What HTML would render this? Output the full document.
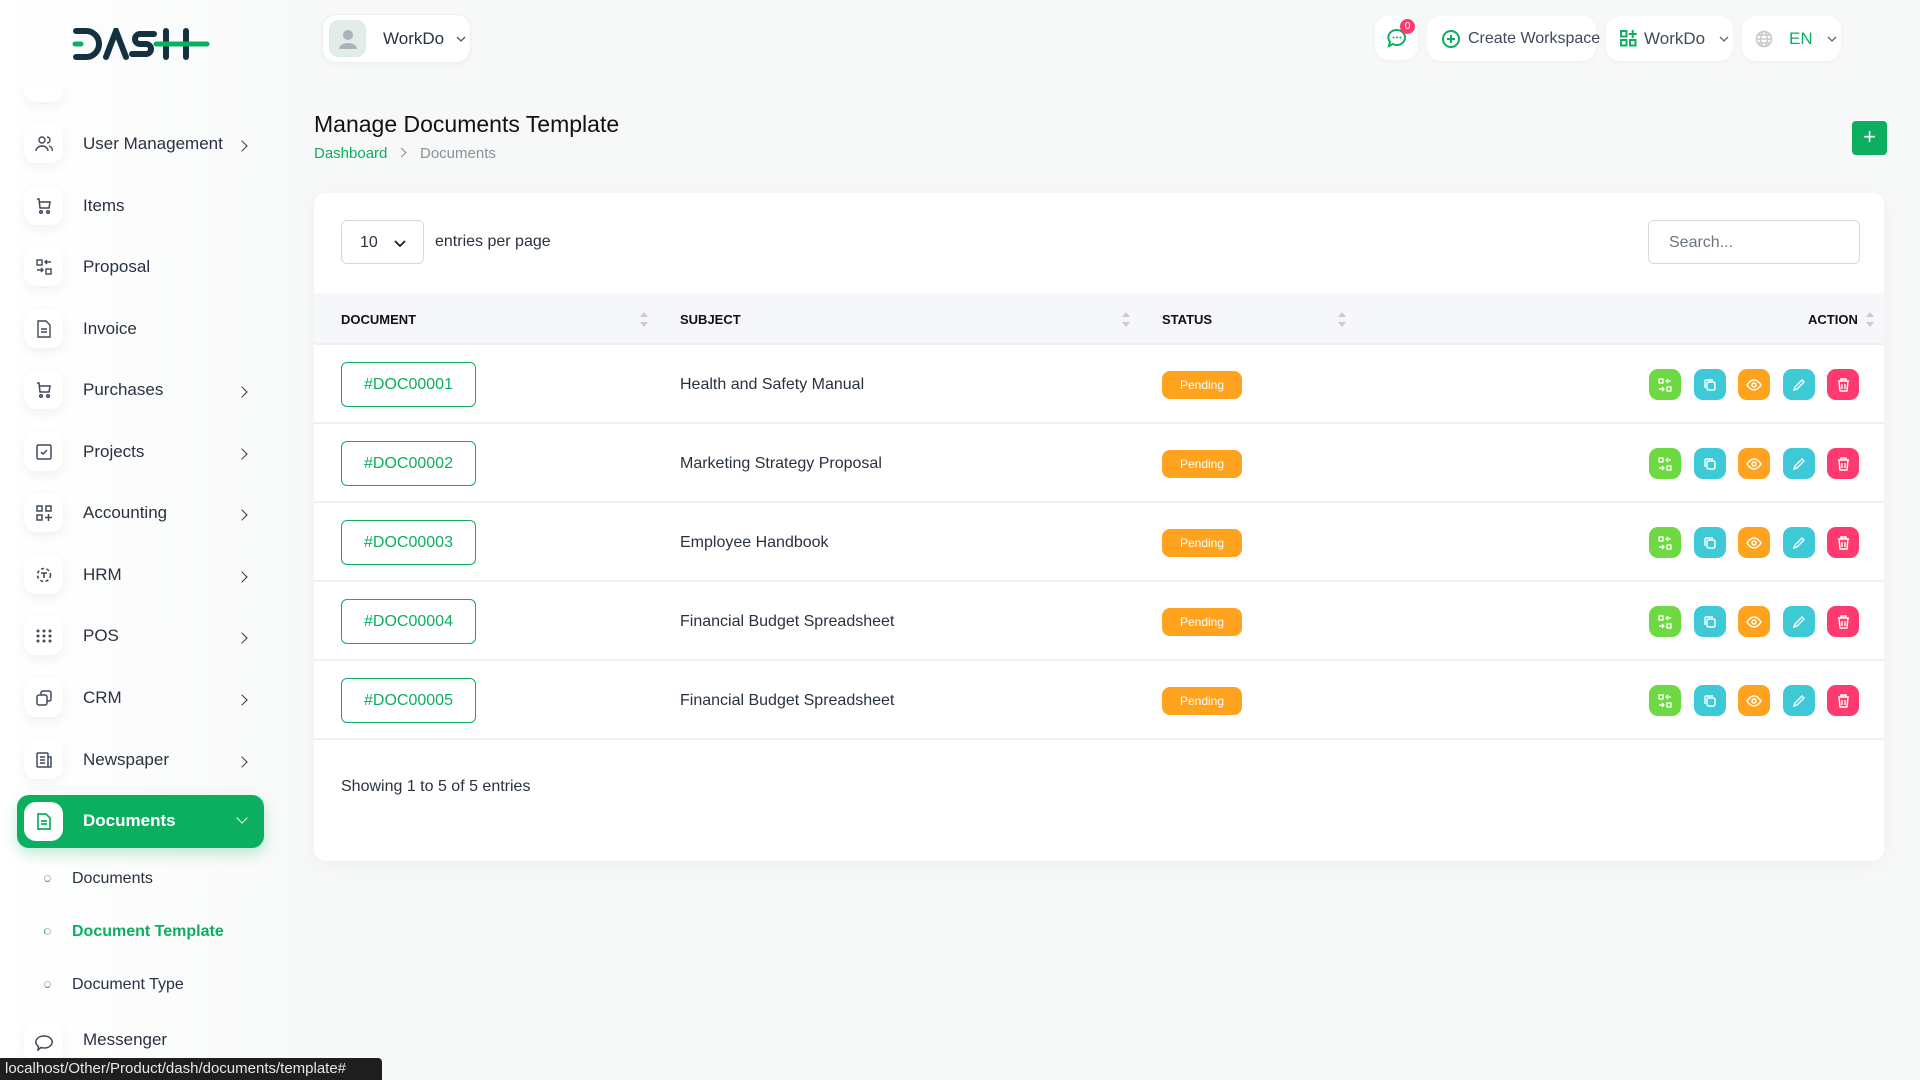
<!DOCTYPE html>
<html><head><meta charset="utf-8">
<style>
*{box-sizing:border-box;margin:0;padding:0}
body{width:1920px;height:1080px;overflow:hidden;background:#f7f8f8;font-family:"Liberation Sans",sans-serif;color:#293240;position:relative}
.abs{position:absolute;white-space:nowrap}
.side{position:absolute;left:0;top:0;width:290px;height:1080px;background:linear-gradient(90deg,#fff,#f8f9f9)}
.ib{position:absolute;left:24px;width:39px;height:39px;background:#fff;border-radius:12px;box-shadow:0 4px 12px rgba(0,0,0,.06);display:flex;align-items:center;justify-content:center}
.lbl{position:absolute;left:83px;font-size:17px;color:#293240;white-space:nowrap}
.chev{position:absolute;left:238px;width:8px;height:8px;border-right:1.6px solid #333;border-top:1.6px solid #333;transform:rotate(45deg)}
.pill{position:absolute;background:#fff;border-radius:14px;box-shadow:0 2px 6px rgba(0,0,0,.03);display:flex;align-items:center;white-space:nowrap}
.card{position:absolute;left:314px;top:193px;width:1570px;height:668px;background:#fff;border-radius:12px;box-shadow:0 4px 20px rgba(0,0,0,.04)}
.th{position:absolute;font-size:13px;font-weight:bold;color:#111;top:312px}
.sort{position:absolute;top:312px;width:8px;height:16px}
.sort:before{content:"";position:absolute;left:0;top:0;border:4px solid transparent;border-bottom:5px solid #ccc;border-top:0}
.sort:after{content:"";position:absolute;left:0;top:10px;border:4px solid transparent;border-top:5px solid #ccc;border-bottom:0}
.row{position:absolute;left:314px;width:1570px;height:79px;border-bottom:2px solid #eef0f2}
.doc{position:absolute;left:341px;width:135px;height:45px;border:1.5px solid #0caf60;border-radius:6px;color:#0caf60;font-size:16px;display:flex;align-items:center;justify-content:center}
.subj{position:absolute;left:680px;font-size:16px;color:#293240}
.badge{position:absolute;left:1162px;width:80px;height:28px;background:#ffa21d;border-radius:8px;color:#fff;font-size:12px;display:flex;align-items:center;justify-content:center}
.ab{position:absolute;width:32px;height:31px;border-radius:9px;display:flex;align-items:center;justify-content:center}
</style></head><body>
<div class="side"></div>
<svg class="abs" style="left:72px;top:28px" width="138" height="32" viewBox="0 0 138 32">
<g fill="none" stroke="#14313f" stroke-width="6" stroke-linecap="round">
<path d="M4 3h10a13 13 0 0 1 0 26H4"/>
<path d="M34 29L44 3L54 29"/>
<path d="M82 6h-14a5 5 0 0 0 0 10h6a5 5 0 0 1 0 10h-14"/>
<path d="M94 3v26M114 3v26"/>
</g>
<path d="M3 16h6M84 16h51" stroke="#0caf60" stroke-width="5" stroke-linecap="round"/>
</svg>
<div class="pill" style="left:322px;top:14px;width:149px;height:49px;border:1px solid #eee">
<div style="margin-left:6px;width:37px;height:37px;border-radius:10px;background:#e3ece8;border:1px solid #d5eee0;display:flex;align-items:center;justify-content:center">
<svg width="22" height="22" viewBox="0 0 22 22"><circle cx="11" cy="7" r="5" fill="#a9b4bc"/><path d="M2 21a9 6 0 0 1 18 0z" fill="#a9b4bc"/></svg></div>
<span style="margin-left:17px;font-size:17px">WorkDo</span>
<svg style="margin-left:12px" width="10" height="6"><path d="M1 1l4 4 4-4" stroke="#555" fill="none" stroke-width="1.3"/></svg>
</div>
<div class="pill" style="left:1375px;top:16px;width:43px;height:44px;justify-content:center">
<svg width="22" height="22" viewBox="0 0 22 22"><path d="M11 3a8 7.5 0 1 1-4 14l-4 2 1-4A8 7.5 0 0 1 11 3z" fill="none" stroke="#0caf60" stroke-width="2"/><circle cx="7.5" cy="10.5" r="1" fill="#0caf60"/><circle cx="11" cy="10.5" r="1" fill="#0caf60"/><circle cx="14.5" cy="10.5" r="1" fill="#0caf60"/></svg>
<div class="abs" style="left:25px;top:3px;width:15px;height:15px;border-radius:50%;background:#ff3a6e;color:#fff;font-size:10px;text-align:center;line-height:15px">0</div>
</div>
<div class="pill" style="left:1427px;top:16px;width:169px;height:45px">
<svg style="margin-left:14px;flex:none" width="20" height="20" viewBox="0 0 20 20"><circle cx="10" cy="10" r="8" fill="none" stroke="#0caf60" stroke-width="2"/><path d="M10 6v8M6 10h8" stroke="#0caf60" stroke-width="2"/></svg>
<span style="margin-left:7px;font-size:16px;color:#3e4a5a">Create Workspace</span></div>
<div class="pill" style="left:1606px;top:16px;width:127px;height:45px">
<svg style="margin-left:14px" width="17" height="17" viewBox="0 0 17 17"><g fill="none" stroke="#0caf60" stroke-width="2"><rect x="1" y="1" width="5.5" height="5.5"/><rect x="1" y="10" width="5.5" height="5.5"/><rect x="10" y="10" width="5.5" height="5.5"/><path d="M12.7 0v8M8.7 4h8"/></g></svg>
<span style="margin-left:7px;font-size:17px;color:#3e4a5a">WorkDo</span>
<svg style="margin-left:14px" width="10" height="6"><path d="M1 1l4 4 4-4" stroke="#666" fill="none" stroke-width="1.3"/></svg></div>
<div class="pill" style="left:1742px;top:16px;width:99px;height:45px">
<svg style="margin-left:13px" width="18" height="18" viewBox="0 0 18 18"><g fill="none" stroke="#c8c8c8" stroke-width="1.5"><circle cx="9" cy="9" r="7.5"/><ellipse cx="9" cy="9" rx="3.3" ry="7.5"/><path d="M1.5 9h15M3 5h12M3 13h12"/></g></svg>
<span style="margin-left:16px;font-size:17px;color:#0caf60">EN</span>
<svg style="margin-left:14px" width="10" height="6"><path d="M1 1l4 4 4-4" stroke="#666" fill="none" stroke-width="1.3"/></svg></div>

<div class="ib" style="top:64px;height:38px;clip-path:inset(24px -20px -20px -20px)"></div>
<div class="ib" style="top:124px"><svg width="18" height="18" viewBox="0 0 18 18" fill="none" stroke="#3e4a5a" stroke-width="1.4"><circle cx="7" cy="5" r="3"/><path d="M1 16a6 5 0 0 1 12 0M12 2a3 3 0 0 1 0 6M14 11a5 4 0 0 1 3 5"/></svg></div>
<div class="lbl" style="top:134px">User Management</div><div class="chev" style="top:142px"></div>
<div class="ib" style="top:186px"><svg width="18" height="18" viewBox="0 0 18 18" fill="none" stroke="#3e4a5a" stroke-width="1.5"><path d="M2 2h2l1 9h9l1-6H5"/><circle cx="6" cy="15" r="1.3"/><circle cx="13" cy="15" r="1.3"/></svg></div>
<div class="lbl" style="top:196px">Items</div>
<div class="ib" style="top:247px"><svg width="18" height="18" viewBox="0 0 18 18" fill="none" stroke="#3e4a5a" stroke-width="1.4"><rect x="2" y="2" width="5" height="5"/><rect x="11" y="11" width="5" height="5"/><path d="M11 4h5M2 12h5M12 2l-2 2 2 2M6 10l2 2-2 2"/></svg></div>
<div class="lbl" style="top:257px">Proposal</div>
<div class="ib" style="top:309px"><svg width="16" height="18" viewBox="0 0 16 18" fill="none" stroke="#3e4a5a" stroke-width="1.4"><path d="M2 1h8l4 4v12H2z"/><path d="M5 9h6M5 12h6"/></svg></div>
<div class="lbl" style="top:319px">Invoice</div>
<div class="ib" style="top:370px"><svg width="18" height="18" viewBox="0 0 18 18" fill="none" stroke="#3e4a5a" stroke-width="1.5"><path d="M2 2h2l1 9h9l1-6H5"/><circle cx="6" cy="15" r="1.3"/><circle cx="13" cy="15" r="1.3"/></svg></div>
<div class="lbl" style="top:380px">Purchases</div><div class="chev" style="top:388px"></div>
<div class="ib" style="top:432px"><svg width="16" height="16" viewBox="0 0 16 16" fill="none" stroke="#3e4a5a" stroke-width="1.5"><rect x="1" y="1" width="14" height="14" rx="1.5"/><path d="M5 8l2 2 4-4"/></svg></div>
<div class="lbl" style="top:442px">Projects</div><div class="chev" style="top:450px"></div>
<div class="ib" style="top:493px"><svg width="16" height="16" viewBox="0 0 16 16" fill="none" stroke="#3e4a5a" stroke-width="1.5"><rect x="1" y="1" width="5" height="5"/><rect x="10" y="1" width="5" height="5"/><rect x="1" y="10" width="5" height="5"/><path d="M12.5 9v7M9 12.5h7"/></svg></div>
<div class="lbl" style="top:503px">Accounting</div><div class="chev" style="top:511px"></div>
<div class="ib" style="top:555px"><svg width="16" height="16" viewBox="0 0 16 16" fill="none" stroke="#3e4a5a" stroke-width="1.6" stroke-dasharray="3 2.5"><circle cx="8" cy="8" r="6.5"/><path d="M5 6h6M8 6v5" stroke-dasharray="none"/></svg></div>
<div class="lbl" style="top:565px">HRM</div><div class="chev" style="top:573px"></div>
<div class="ib" style="top:616px"><svg width="16" height="14" viewBox="0 0 16 14" fill="#3e4a5a"><circle cx="2" cy="2" r="1.5"/><circle cx="8" cy="2" r="1.5"/><circle cx="14" cy="2" r="1.5"/><circle cx="2" cy="7" r="1.5"/><circle cx="8" cy="7" r="1.5"/><circle cx="14" cy="7" r="1.5"/><circle cx="2" cy="12" r="1.5"/><circle cx="8" cy="12" r="1.5"/><circle cx="14" cy="12" r="1.5"/></svg></div>
<div class="lbl" style="top:626px">POS</div><div class="chev" style="top:634px"></div>
<div class="ib" style="top:678px"><svg width="16" height="16" viewBox="0 0 16 16" fill="none" stroke="#3e4a5a" stroke-width="1.5"><rect x="1" y="5" width="10" height="10" rx="2"/><path d="M5 5V3a2 2 0 0 1 2-2h6a2 2 0 0 1 2 2v6a2 2 0 0 1-2 2h-2"/></svg></div>
<div class="lbl" style="top:688px">CRM</div><div class="chev" style="top:696px"></div>
<div class="ib" style="top:740px"><svg width="16" height="16" viewBox="0 0 16 16" fill="none" stroke="#3e4a5a" stroke-width="1.5"><rect x="1" y="1" width="11" height="14" rx="1"/><path d="M12 5h3v10h-3M4 5h5M4 8h5M4 11h5"/></svg></div>
<div class="lbl" style="top:750px">Newspaper</div><div class="chev" style="top:758px"></div>
<div class="abs" style="left:17px;top:795px;width:247px;height:53px;background:#0caf60;border-radius:12px;box-shadow:0 6px 14px rgba(12,175,96,.25)"></div>
<div class="ib" style="top:802px;box-shadow:none"><svg width="14" height="17" viewBox="0 0 14 17" fill="none" stroke="#0caf60" stroke-width="1.7"><path d="M1 1h8l4 4v11H1z"/><path d="M4 8h6M4 11h6"/></svg></div>
<div class="lbl" style="top:811px;color:#fff;font-weight:bold">Documents</div>
<div class="abs" style="left:238px;top:814px;width:8px;height:8px;border-right:1.6px solid #fff;border-bottom:1.6px solid #fff;transform:rotate(45deg)"></div>
<div class="abs" style="left:44px;top:875px;width:7px;height:7px;border-radius:50%;border:1.5px solid #bbb;border-bottom-color:#0caf60"></div>
<div class="abs" style="left:72px;top:870px;font-size:16px;color:#293240">Documents</div>
<div class="abs" style="left:44px;top:928px;width:7px;height:7px;border-radius:50%;border:1.5px solid #bbb;border-left-color:#0caf60"></div>
<div class="abs" style="left:72px;top:923px;font-size:16px;color:#0caf60;font-weight:bold">Document Template</div>
<div class="abs" style="left:44px;top:981px;width:7px;height:7px;border-radius:50%;border:1.5px solid #bbb;border-bottom-color:#0caf60"></div>
<div class="abs" style="left:72px;top:976px;font-size:16px;color:#293240">Document Type</div>
<div class="ib" style="top:1023px"><svg width="18" height="16" viewBox="0 0 18 16" fill="none" stroke="#3e4a5a" stroke-width="1.5"><path d="M9 1a8 6 0 1 1-3 11.5L3 15l.5-3.5A8 6 0 0 1 9 1z"/></svg></div>
<div class="lbl" style="top:1030px">Messenger</div>
<div class="abs" style="left:0;top:1058px;width:382px;height:22px;background:#1f1f1f;border-radius:0 4px 0 0;color:#e8e8e8;font-size:15px;line-height:22px;padding-left:5px">localhost/Other/Product/dash/documents/template#</div>

<div class="abs" style="left:314px;top:111px;font-size:23px;color:#111">Manage Documents Template</div>
<div class="abs" style="left:314px;top:145px;font-size:15px;color:#0caf60">Dashboard</div>
<div class="abs" style="left:398px;top:149px;width:7px;height:7px;border-right:1.3px solid #888;border-top:1.3px solid #888;transform:rotate(45deg)"></div>
<div class="abs" style="left:420px;top:145px;font-size:15px;color:#8a9099">Documents</div>
<div class="abs" style="left:1852px;top:121px;width:35px;height:34px;background:#0caf60;border-radius:4px;color:#fff;font-size:22px;text-align:center;line-height:32px">+</div>

<div class="card"></div>
<div class="abs" style="left:341px;top:220px;width:83px;height:44px;border:1px solid #d6dae0;border-radius:6px;font-size:16px;padding:13px 0 0 18px">10
<svg class="abs" style="left:52px;top:19px" width="12" height="7"><path d="M1 1l5 5 5-5" stroke="#222" fill="none" stroke-width="1.8"/></svg></div>
<div class="abs" style="left:435px;top:233px;font-size:16px">entries per page</div>
<div class="abs" style="left:1648px;top:220px;width:212px;height:44px;border:1px solid #d6dae0;border-radius:6px;font-size:16px;color:#6c7580;padding:13px 0 0 20px">Search...</div>

<div class="abs" style="left:314px;top:293px;width:1570px;height:52px;background:#f6f7fb;border-bottom:2px solid #eef0f2"></div>
<div class="th" style="left:341px">DOCUMENT</div><div class="sort" style="left:640px"></div>
<div class="th" style="left:680px">SUBJECT</div><div class="sort" style="left:1122px"></div>
<div class="th" style="left:1162px">STATUS</div><div class="sort" style="left:1338px"></div>
<div class="th" style="left:1808px">ACTION</div><div class="sort" style="left:1866px"></div>

<div id="rows"></div>
<div class="abs" style="left:341px;top:778px;font-size:16px">Showing 1 to 5 of 5 entries</div>

<script>
var subs=["Health and Safety Manual","Marketing Strategy Proposal","Employee Handbook","Financial Budget Spreadsheet","Financial Budget Spreadsheet"];
var ic=[
['#6fd943','<svg width="14" height="14" viewBox="0 0 14 14" fill="none" stroke="#fff" stroke-width="1.3"><rect x="1" y="1" width="4" height="4"/><rect x="9" y="9" width="4" height="4"/><path d="M8 3h5M10 1L8 3l2 2M1 11h5M4 9l2 2-2 2"/></svg>'],
['#3ec9d6','<svg width="14" height="14" viewBox="0 0 14 14" fill="none" stroke="#fff" stroke-width="1.4"><rect x="4" y="4" width="8" height="8" rx="1.5"/><path d="M10 2H3a1 1 0 0 0-1 1v7"/></svg>'],
['#ffa21d','<svg width="16" height="12" viewBox="0 0 16 12" fill="none" stroke="#fff" stroke-width="1.5"><path d="M1 6s3-5 7-5 7 5 7 5-3 5-7 5-7-5-7-5z"/><circle cx="8" cy="6" r="2"/></svg>'],
['#3ec9d6','<svg width="14" height="14" viewBox="0 0 14 14" fill="none" stroke="#fff" stroke-width="1.4"><path d="M2 12l1-3 7-7 2 2-7 7z"/></svg>'],
['#ff3a6e','<svg width="13" height="14" viewBox="0 0 13 14" fill="none" stroke="#fff" stroke-width="1.4"><path d="M1 3h11M4 3V1h5v2M2 3l1 10h7l1-10M5 6v5M8 6v5"/></svg>']];
var xs=[1649,1694,1738,1783,1827];
var h="";
for(var i=0;i<5;i++){var t=345+i*79;var c=t+40;
h+='<div class="row" style="top:'+t+'px"></div>';
h+='<div class="doc" style="top:'+(c-23)+'px">#DOC0000'+(i+1)+'</div>';
h+='<div class="subj" style="top:'+(c-9)+'px">'+subs[i]+'</div>';
h+='<div class="badge" style="top:'+(c-14)+'px">Pending</div>';
for(var j=0;j<5;j++)h+='<div class="ab" style="left:'+xs[j]+'px;top:'+(c-16)+'px;background:'+ic[j][0]+'">'+ic[j][1]+'</div>';}
document.getElementById('rows').innerHTML=h;
</script>
</body></html>
